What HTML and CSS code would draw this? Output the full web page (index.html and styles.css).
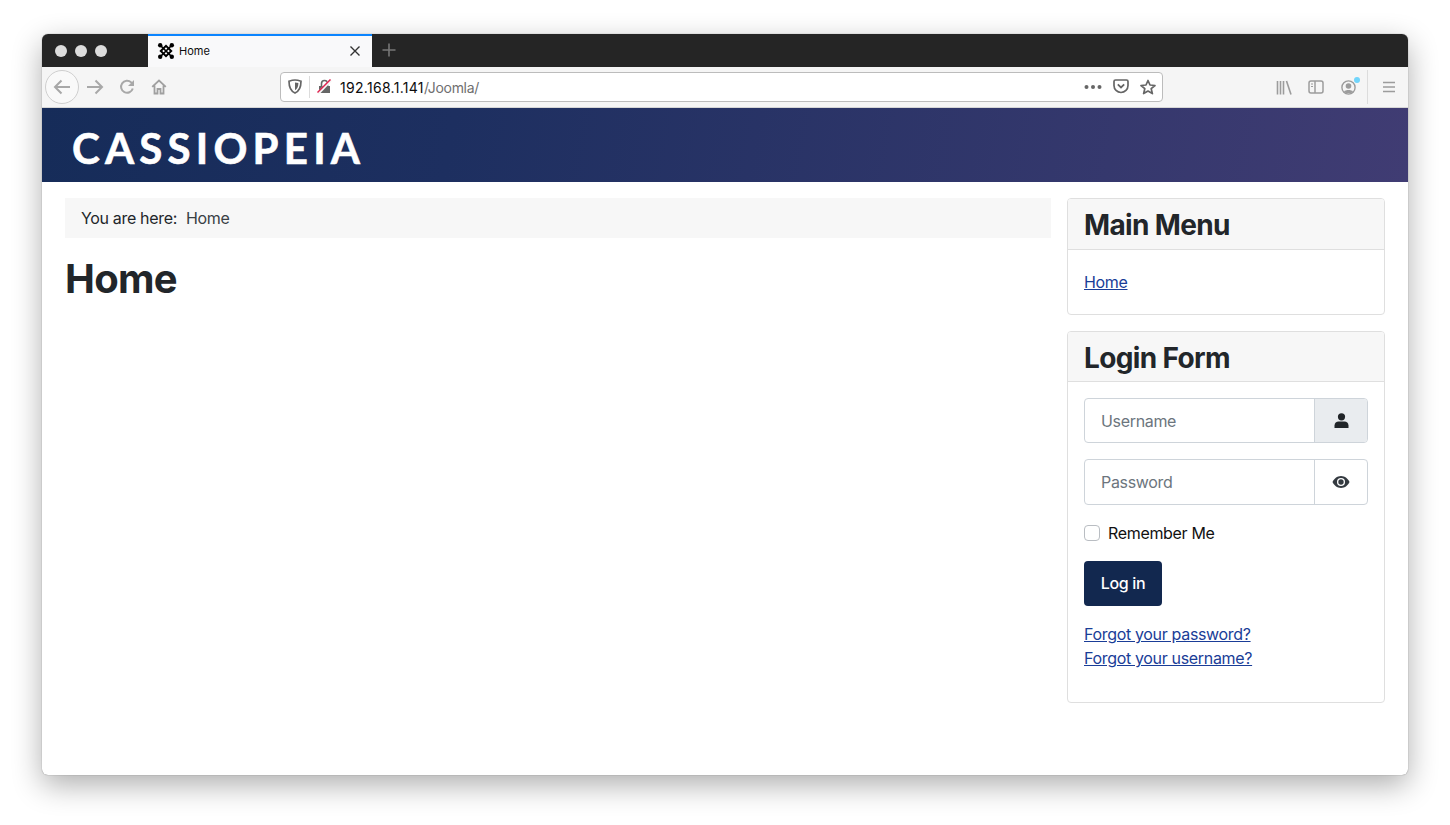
FILE: index.html
```html
<!DOCTYPE html>
<html lang="en">
<head>
<meta charset="utf-8">
<title>Home</title>
<link rel="stylesheet" href="styles.css">
</head>
<body>
<div class="window">
  <div class="tabbar">
    <div class="lights"><span></span><span></span><span></span></div>
    <div class="tab">
      <svg class="favicon" width="18" height="18" viewBox="0 0 18 18"><g fill="none" stroke="#000" stroke-linecap="round"><path d="M4 4 L14 14M14 4 L4 14" stroke-width="1.700"/><path d="M3.800 9 L9 3.800 L14.200 9 L9 14.200Z" stroke-width="2"/></g><g fill="#000"><circle cx="3.200" cy="3.200" r="2.200"/><circle cx="14.800" cy="3.200" r="2.200"/><circle cx="3.200" cy="14.800" r="2.200"/><circle cx="14.800" cy="14.800" r="2.200"/></g></svg>
      <span class="tab-title">Home</span>
      <svg class="tab-close" width="12" height="12" viewBox="0 0 12 12"><path d="M1.500 1.500 L10.500 10.500M10.500 1.500 L1.500 10.500" stroke="#333" stroke-width="1.400" fill="none"/></svg>
    </div>
    <svg class="newtab" width="16" height="16" viewBox="0 0 16 16"><path d="M8 1.500V14.500M1.500 8H14.500" stroke="#777" stroke-width="1.600" fill="none"/></svg>
  </div>
  <div class="toolbar">
    <div class="nav">
      <span class="back"><svg width="18" height="16" viewBox="0 0 18 16"><path d="M17 8H2M8.500 1.500 L2 8 L8.500 14.500" fill="none" stroke="#a8a8a8" stroke-width="2"/></svg></span>
      <svg class="fwd" width="18" height="16" viewBox="0 0 18 16"><path d="M1 8H16M9.500 1.500 L16 8 L9.500 14.500" fill="none" stroke="#a8a8a8" stroke-width="2"/></svg>
      <svg class="reload" width="16" height="16" viewBox="0 0 16 16"><path d="M13.800 9.500A6 6 0 1 1 12.200 3.400L14.500 5.500" fill="none" stroke="#a8a8a8" stroke-width="2"/><path d="M15 1V7H9Z" fill="#a8a8a8"/></svg>
      <svg class="home" width="16" height="16" viewBox="0 0 16 16"><path d="M1.200 7.800 L8 1.500 L14.800 7.800M3.500 6.500V14.500H6.500V10H9.500V14.500H12.500V6.500" fill="none" stroke="#a0a0a0" stroke-width="1.800"/></svg>
    </div>
    <div class="urlbar">
      <svg class="shield" width="14" height="15" viewBox="0 0 14 15"><path d="M7 1 C9 1 11 1.500 13 2.200 C13 8 11.500 12 7 14 C2.500 12 1 8 1 2.200 C3 1.500 5 1 7 1Z" fill="none" stroke="#666" stroke-width="1.700"/><path d="M7 3.500 C8 3.500 9.300 3.800 10.400 4.100 C10.300 7.500 9.300 10 7 11.200Z" fill="#666"/></svg>
      <span class="url-sep"></span>
      <svg class="lock" width="15" height="15" viewBox="0 0 15 15"><path d="M2 7H13V14H2Z" fill="#666"/><path d="M4.500 7V4.500A3 3 0 0 1 10.500 4.500V7" fill="none" stroke="#666" stroke-width="1.600"/><path d="M1 14.500 L14 1" stroke="#f6f6f6" stroke-width="3"/><path d="M0.500 13.500 L13.500 0.500" stroke="#e0224f" stroke-width="1.500"/></svg>
      <span class="url"><span class="url-host">192.168.1.141</span>/Joomla/</span>
      <span class="url-actions">
        <svg width="18" height="4" viewBox="0 0 18 4"><g fill="#666"><circle cx="2.500" cy="2" r="2"/><circle cx="9" cy="2" r="2"/><circle cx="15.500" cy="2" r="2"/></g></svg>
        <svg width="16" height="15" viewBox="0 0 16 15"><path d="M2.500 1H13.500A1.500 1.500 0 0 1 15 2.500V6.500A7 7 0 0 1 1 6.500V2.500A1.500 1.500 0 0 1 2.500 1Z" fill="none" stroke="#666" stroke-width="1.700"/><path d="M4.800 5.400 L8 8.400 L11.200 5.400" fill="none" stroke="#666" stroke-width="1.800"/></svg>
        <svg width="16" height="16" viewBox="0 0 16 16"><path d="M8 1.500 L10 6 L15 6.500 L11.200 9.700 L12.400 14.600 L8 12 L3.600 14.600 L4.800 9.700 L1 6.500 L6 6Z" fill="none" stroke="#666" stroke-width="1.700" stroke-linejoin="round"/></svg>
      </span>
    </div>
    <div class="tools">
      <svg width="16" height="15" viewBox="0 0 16 15"><path d="M1.500 1V14.500M4.500 1V14.500M7.500 1V14.500M10.500 1 L15 14.500" fill="none" stroke="#9c9c9c" stroke-width="1.600"/></svg>
      <svg width="16" height="14" viewBox="0 0 16 14"><rect x="1" y="1" width="14" height="12" rx="2" fill="none" stroke="#9c9c9c" stroke-width="1.500"/><path d="M7 1V13" stroke="#9c9c9c" stroke-width="1.500"/><path d="M3 4H5M3 6.500H5" stroke="#9c9c9c" stroke-width="1.200"/></svg>
      <span class="account">
        <svg width="15" height="15" viewBox="0 0 15 15"><circle cx="7.500" cy="7.500" r="6.600" fill="none" stroke="#9c9c9c" stroke-width="1.400"/><circle cx="7.500" cy="6" r="2.800" fill="#9c9c9c"/><path d="M3 11.500 C4.500 9.500 10.500 9.500 12 11.500 L10 13.300 L5 13.300Z" fill="#9c9c9c"/></svg>
        <span class="badge"></span>
      </span>
      <span class="tool-sep"></span>
      <svg width="12" height="12" viewBox="0 0 12 12"><path d="M0 1.500H12M0 6H12M0 10.500H12" stroke="#9c9c9c" stroke-width="1.500"/></svg>
    </div>
  </div>
  <header class="site-header"><span class="brand">CASSIOPEIA</span></header>
  <div class="content">
    <main class="main">
      <nav class="breadcrumb"><span>You are here:</span><a href="#">Home</a></nav>
      <h1>Home</h1>
    </main>
    <aside class="sidebar">
      <section class="card">
        <h3 class="card-title">Main Menu</h3>
        <div class="card-body menu-body"><a class="link" href="#">Home</a></div>
      </section>
      <section class="card">
        <h3 class="card-title">Login Form</h3>
        <div class="card-body login-body">
          <div class="input-group">
            <span class="input-text">Username</span>
            <span class="addon addon-fill"><svg width="15" height="15" viewBox="0 0 15 15"><circle cx="7.500" cy="3.800" r="3.600" fill="#212529"/><path d="M0.500 15V12.500C0.500 10 2.500 8.500 4.500 8.500H10.500C12.500 8.500 14.500 10 14.500 12.500V15Z" fill="#212529"/></svg></span>
          </div>
          <div class="input-group">
            <span class="input-text">Password</span>
            <span class="addon"><svg width="18" height="14" viewBox="0 0 18 14"><path d="M9 1C13 1 16 3.800 17.500 7C16 10.200 13 13 9 13C5 13 2 10.200 0.500 7C2 3.800 5 1 9 1Z" fill="#343a40"/><circle cx="9" cy="7" r="4" fill="#fff"/><circle cx="9" cy="7" r="2.700" fill="#343a40"/></svg></span>
          </div>
          <label class="remember"><span class="checkbox"></span>Remember Me</label>
          <span class="btn">Log in</span>
          <div class="login-links">
            <a class="link" href="#">Forgot your password?</a>
            <a class="link" href="#">Forgot your username?</a>
          </div>
        </div>
      </section>
    </aside>
  </div>
</div>
</body>
</html>
```
FILE: styles.css
```css
* { box-sizing: border-box; }
html, body { margin: 0; height: 100%; background: #fff; overflow: hidden; }
body { padding: 34px 42px 50px; font-family: Inter, "Liberation Sans", sans-serif; color: #22262a; font-size: 16px; }
.window { height: 741px; border-radius: 6px; background: #fff; overflow: hidden; display: flex; flex-direction: column; box-shadow: 0 0 1px rgba(0,0,0,.55), 0 10px 30px rgba(0,0,0,.32); }

.tabbar { height: 33px; flex: none; background: #252525; display: flex; align-items: stretch; }
.lights { width: 106px; display: flex; align-items: center; gap: 8px; padding-left: 13px; }
.lights span { width: 12px; height: 12px; border-radius: 50%; background: #dcdcdc; }
.tab { width: 224px; background: #f9f9fa; border-top: 2px solid #0a84ff; display: flex; align-items: center; padding: 0 11px 1px 9px; }
.favicon { flex: none; }
.tab-title { margin-left: 4px; font-size: 11px; color: #0c0c0d; flex: 1; }
.tab-close { flex: none; }
.newtab { margin: 8px 0 0 9px; }

.toolbar { height: 41px; flex: none; background: #f5f5f5; border-bottom: 1px solid #d6d6d6; display: flex; align-items: center; }
.nav { width: 238px; flex: none; display: flex; align-items: center; padding-left: 3px; }
.back { width: 34px; height: 34px; border: 1px solid #cfcfcf; border-radius: 50%; display: flex; align-items: center; justify-content: center; background: #f9f9f9; }
.fwd { margin-left: 7px; }
.reload { margin-left: 15px; }
.home { margin-left: 16px; }
.urlbar { width: 883px; height: 30px; flex: none; background: #fff; border: 1px solid #bcbcbc; border-radius: 4px; display: flex; align-items: center; padding-left: 7px; margin-top: -1px; }
.url-sep { width: 1px; height: 22px; background: #dcdcdc; margin: 0 7px; }
.lock { flex: none; }
.url { margin-left: 8px; padding-top: 2px; font-size: 14px; color: #6f6f6f; letter-spacing: -0.3px; flex: 1; }
.url-host { color: #0c0c0d; letter-spacing: 0.3px; }
.url-actions { display: flex; align-items: center; gap: 11px; padding-right: 6px; }
.tools { flex: 1; display: flex; align-items: center; padding-left: 113px; }
.tools > svg:nth-child(2) { margin-left: 16px; }
.account { margin-left: 17px; position: relative; display: flex; }
.badge { position: absolute; top: -3px; right: -4px; width: 6px; height: 6px; border-radius: 50%; background: #71d5fb; }
.tool-sep { width: 1px; height: 34px; background: #dcdcdc; margin: 0 15px 0 11px; }

.site-header { height: 74px; flex: none; background: linear-gradient(100deg, #162c59 0%, #1d2f60 30%, #403c73 100%); display: flex; align-items: center; padding-left: 30px; }
.brand { color: #fff; font-family: Lato, "Noto Sans", sans-serif; font-weight: 700; font-size: 42px; letter-spacing: 5.2px; line-height: 1; margin-top: 5px; -webkit-text-stroke: 0.6px #fff; }

.content { flex: 1; display: flex; gap: 16px; padding: 16px 23px 0; align-items: flex-start; letter-spacing: -0.33px; }
.main { width: 986px; flex: none; }
.breadcrumb { height: 40px; background: #f7f7f7; padding: 0 16px; display: flex; align-items: center; gap: 9px; color: #22262a; font-size: 16px; }
.breadcrumb a { color: #3a4045; text-decoration: none; }
h1 { font-size: 40px; font-weight: 700; line-height: 48px; margin: 17px 0 0; color: #22262a; letter-spacing: -0.7px; }

.sidebar { flex: 1; display: flex; flex-direction: column; gap: 16px; }
.card { border: 1px solid #dfdfdf; border-radius: 4px; background: #fff; }
.card-title { margin: 0; height: 50.5px; background: #f7f7f7; border-bottom: 1px solid #dfdfdf; border-radius: 3px 3px 0 0; padding: 0 16px; font-size: 28px; line-height: 53px; font-weight: 700; color: #22262a; letter-spacing: -0.65px; }
.card-body { padding: 16px; }
.menu-body { height: 64.3px; padding-top: 22px; line-height: 20px; }
.link { color: #1a3d97; text-decoration: underline; font-size: 16px; }
.login-body { height: 319.7px; }
.input-group { height: 45.2px; border: 1px solid #ced4da; border-radius: 4px; display: flex; margin-bottom: 16px; }
.input-text { flex: 1; padding-left: 16px; display: flex; align-items: center; color: #6c757d; font-size: 16px; }
.addon { width: 53px; border-left: 1px solid #ced4da; display: flex; align-items: center; justify-content: center; }
.addon-fill { background: #e9ecef; border-radius: 0 3px 3px 0; }
.remember { display: flex; align-items: center; height: 24px; color: #111; font-size: 16px; }
.checkbox { width: 16px; height: 16px; border: 1px solid #b9bdc2; border-radius: 4px; margin-right: 8px; background: #fff; }
.btn { display: flex; width: 78px; height: 45.2px; margin-top: 16px; background: #12284f; color: #fff; font-weight: 500; border-radius: 4px; align-items: center; justify-content: center; font-size: 16px; }
.login-links { margin-top: 16px; display: flex; flex-direction: column; align-items: flex-start; line-height: 24px; }
```
